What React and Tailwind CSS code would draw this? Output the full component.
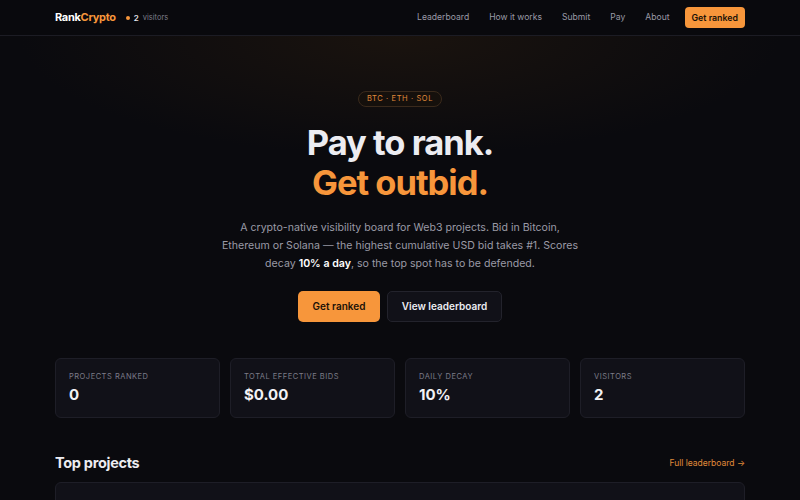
import React from 'react';

const navLinks = ['Leaderboard', 'How it works', 'Submit', 'Pay', 'About'];

const stats = [
    { label: 'Projects ranked', value: '0' },
    { label: 'Total effective bids', value: '$0.00' },
    { label: 'Daily decay', value: '10%' },
    { label: 'Visitors', value: '2' },
];

const App = () => {
    return (
        <div className="min-h-screen bg-[#0a0a0e] text-white font-['Inter',sans-serif] overflow-hidden">
            {/* header */}
            <header className="h-[36px] border-b border-[#1c1c24] bg-[#09090d]">
                <div className="mx-auto w-[690px] h-full flex items-center justify-between">
                    <div className="flex items-center">
                        <span className="text-[11px] font-bold tracking-[-0.3px]">
                            Rank<span className="text-[#f7963b]">Crypto</span>
                        </span>
                        <span className="ml-[10px] w-[4px] h-[4px] rounded-full bg-[#f7963b]" />
                        <span className="ml-[4px] text-[8px] font-semibold text-[#e5e5ea]">2</span>
                        <span className="ml-[4px] text-[7.5px] text-[#7c7c88]">visitors</span>
                    </div>
                    <nav className="flex items-center">
                        {navLinks.map((l) => (
                            <a key={l} className="mr-[20px] text-[8.6px] text-[#9a9aa6]">{l}</a>
                        ))}
                        <button className="ml-[-5px] h-[21px] px-[7px] rounded-[4px] bg-[#f7963b] text-[8.8px] font-semibold text-[#1a1208]">
                            Get ranked
                        </button>
                    </nav>
                </div>
            </header>

            {/* hero */}
            <section className="bg-[radial-gradient(ellipse_380px_120px_at_50%_0%,#1a130e,transparent)] pt-[55px] flex flex-col items-center">
                <span className="h-[16px] px-[8px] flex items-center rounded-full border border-[#3a2a1c] bg-[#15100c] text-[7.5px] tracking-[0.6px] text-[#e08a3a]">
                    BTC · ETH · SOL
                </span>
                <h1 className="mt-[16px] text-center text-[34.5px] leading-[40px] font-bold tracking-[-1px]">
                    <span className="block text-[#ececf1]">Pay to rank.</span>
                    <span className="block text-[#f7963b]">Get outbid.</span>
                </h1>
                <p className="mt-[16px] w-[364px] text-center text-[10.6px] leading-[18px] text-[#9a9aa6]">
                    A crypto-native visibility board for Web3 projects. Bid in Bitcoin, Ethereum or Solana — the highest cumulative USD bid takes #1. Scores decay <b className="font-semibold text-white">10% a day</b>, so the top spot has to be defended.
                </p>
                <div className="mt-[18px] flex gap-[7px]">
                    <button className="w-[82px] h-[31px] rounded-[5px] bg-[#f7963b] text-[10px] font-semibold text-[#1a1208]">
                        Get ranked
                    </button>
                    <button className="w-[115px] h-[31px] rounded-[5px] border border-[#23232c] bg-[#111118] text-[10px] font-semibold text-[#ececf1]">
                        View leaderboard
                    </button>
                </div>
            </section>

            {/* stats */}
            <section className="mx-auto mt-[36px] w-[690px] grid grid-cols-4 gap-[10px]">
                {stats.map((s) => (
                    <div key={s.label} className="h-[60px] rounded-[6px] border border-[#1e1e27] bg-[#111118] px-[13px] pt-[12px]">
                        <div className="text-[7.5px] uppercase tracking-[0.5px] text-[#7c7c88]">{s.label}</div>
                        <div className="mt-[2px] text-[15px] font-bold text-[#f2f2f5]">{s.value}</div>
                    </div>
                ))}
            </section>

            {/* top projects */}
            <section className="mx-auto mt-[34px] w-[690px]">
                <div className="flex items-center justify-between">
                    <h2 className="text-[14.5px] font-bold tracking-[-0.3px] text-[#ececf1]">Top projects</h2>
                    <a className="text-[8.5px] text-[#e08a3a]">Full leaderboard →</a>
                </div>
                <div className="mt-[8px] h-[80px] rounded-[6px] border border-[#1e1e27] bg-[#111118]" />
            </section>
        </div>
    );
};

export default App;
